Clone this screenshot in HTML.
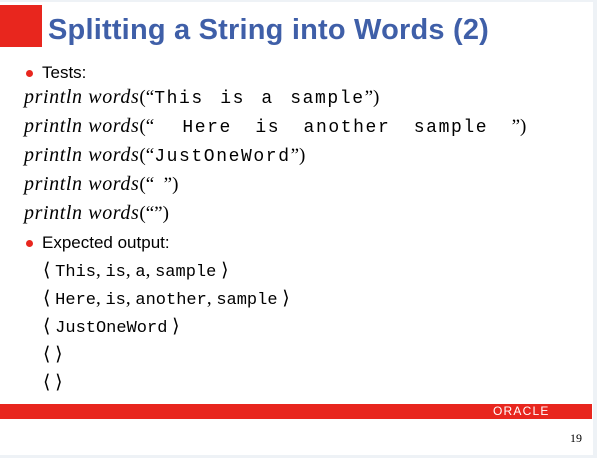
<!DOCTYPE html>
<html><head><meta charset="utf-8"><style>
body{margin:0;width:597px;height:458px;background:#fff;position:relative;overflow:hidden;font-family:"Liberation Sans","DejaVu Sans",sans-serif;}
.a{position:absolute;white-space:pre;}
.sq{left:0;top:5px;width:42px;height:42px;background:#e8261e;position:absolute;}
.t{left:48px;top:14px;font-size:29px;color:#3f5fa8;font-weight:bold;letter-spacing:0.2px;}
.b{font-size:17px;color:#000;}
.dot{position:absolute;width:7px;height:7px;border-radius:50%;background:#e8261e;}
.m{font-family:"Liberation Mono",monospace;font-size:18px;letter-spacing:1.6px;word-spacing:4px;}
.i{font-family:"Liberation Serif",serif;font-style:italic;font-size:20px;letter-spacing:0.6px;}
.s{font-family:"Liberation Serif",serif;font-size:19px;}
.bar{position:absolute;left:0;top:404px;width:592px;height:15px;background:#e8261e;}
.or{position:absolute;left:493px;top:404px;color:#fff;font-size:12px;letter-spacing:1.2px;line-height:15px;}
.pg{position:absolute;left:570px;top:431px;font-family:"Liberation Serif",serif;font-size:12px;}
.edge{position:absolute;left:593px;top:0;width:4px;height:458px;background:#eef2f6;}
.bot{position:absolute;left:0;top:455px;width:597px;height:3px;background:#eef2f6;}
.top{position:absolute;left:0;top:0;width:597px;height:2px;background:#eef2f6;}
.tm{font-family:"Liberation Mono",monospace;font-size:17px;}
</style></head><body>
<div class="top"></div><div class="edge"></div><div class="bot"></div>
<div class="sq"></div>
<div class="a t">Splitting a String into Words (2)</div>
<div class="dot" style="left:26px;top:70px"></div>
<div class="a b" style="left:42px;top:63px">Tests:</div>
<div class="a" style="left:24px;top:86px"><span class="i">println words</span><span class="s">(“</span><span class="m">This is a sample</span><span class="s">”)</span></div>
<div class="a" style="left:24px;top:115px"><span class="i">println words</span><span class="s">(“ </span><span class="m" style="word-spacing:11px"> Here is another sample </span><span class="s">”)</span></div>
<div class="a" style="left:24px;top:144px"><span class="i">println words</span><span class="s">(“</span><span class="m">JustOneWord</span><span class="s">”)</span></div>
<div class="a" style="left:24px;top:173px"><span class="i">println words</span><span class="s">(“  ”)</span></div>
<div class="a" style="left:24px;top:202px"><span class="i">println words</span><span class="s">(“”)</span></div>
<div class="dot" style="left:26px;top:240px"></div>
<div class="a b" style="left:42px;top:233px">Expected output:</div>
<div class="a" style="left:43px;top:259px"><span class="s">⟨ </span><span class="tm">This</span><span class="s">, </span><span class="tm">is</span><span class="s">, </span><span class="tm">a</span><span class="s">, </span><span class="tm">sample</span><span class="s"> ⟩</span></div>
<div class="a" style="left:43px;top:287px"><span class="s">⟨ </span><span class="tm">Here</span><span class="s">, </span><span class="tm">is</span><span class="s">, </span><span class="tm">another</span><span class="s">, </span><span class="tm">sample</span><span class="s"> ⟩</span></div>
<div class="a" style="left:43px;top:315px"><span class="s">⟨ </span><span class="tm">JustOneWord</span><span class="s"> ⟩</span></div>
<div class="a s" style="left:43px;top:343px">⟨ ⟩</div>
<div class="a s" style="left:43px;top:371px">⟨ ⟩</div>
<div class="bar"></div>
<div class="or">ORACLE</div>
<div class="pg">19</div>
</body></html>
